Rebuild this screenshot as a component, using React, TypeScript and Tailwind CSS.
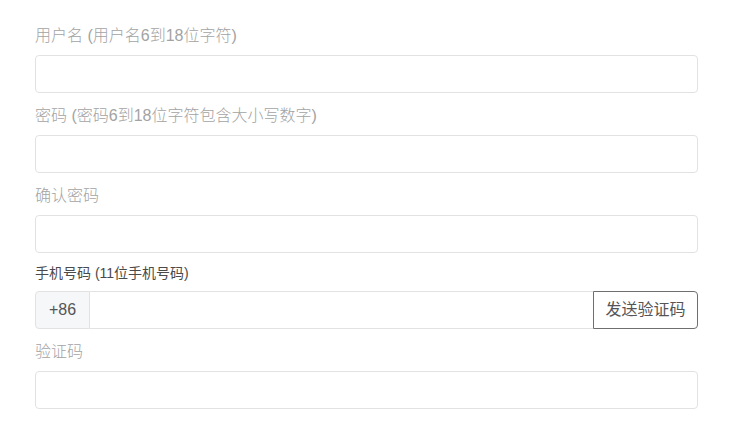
import React from "react";

const font = { fontFamily: '"Liberation Sans", "Noto Sans CJK SC", sans-serif' };

function Field({ label }: { label: string }) {
  return (
    <div className="mb-[10px]">
      <div className="mb-[7px] pt-[1px] text-[16px] font-light leading-[24px] text-[#a3a3a3]">{label}</div>
      <input className="block h-[38px] w-full rounded-[4px] border border-[#e2e2e2] bg-white px-3 text-[16px] outline-none" />
    </div>
  );
}

export default function App() {
  return (
    <div className="min-h-[442px] w-[734px] bg-white pl-[35px] pr-[36px] pt-[23px]" style={font}>
      <Field label="用户名 (用户名6到18位字符)" />
      <Field label="密码 (密码6到18位字符包含大小写数字)" />
      <Field label="确认密码" />
      <div className="mb-[10px]">
        <div className="mb-[8px] text-[14px] leading-[20px] text-[#4a4a4a]">手机号码 (11位手机号码)</div>
        <div className="flex h-[38px] w-full">
          <div className="flex w-[55px] items-center justify-center rounded-l-[4px] border border-[#e2e2e2] bg-[#f6f7f9] text-[16px] text-[#555]">
            +86
          </div>
          <input className="h-full min-w-0 flex-1 border-y border-[#e2e2e2] bg-white px-3 text-[16px] outline-none" />
          <button className="flex w-[105px] items-center justify-center rounded-r-[4px] border border-[#6f6f6f] bg-white text-[16px] text-[#555]">
            发送验证码
          </button>
        </div>
      </div>
      <Field label="验证码" />
    </div>
  );
}
